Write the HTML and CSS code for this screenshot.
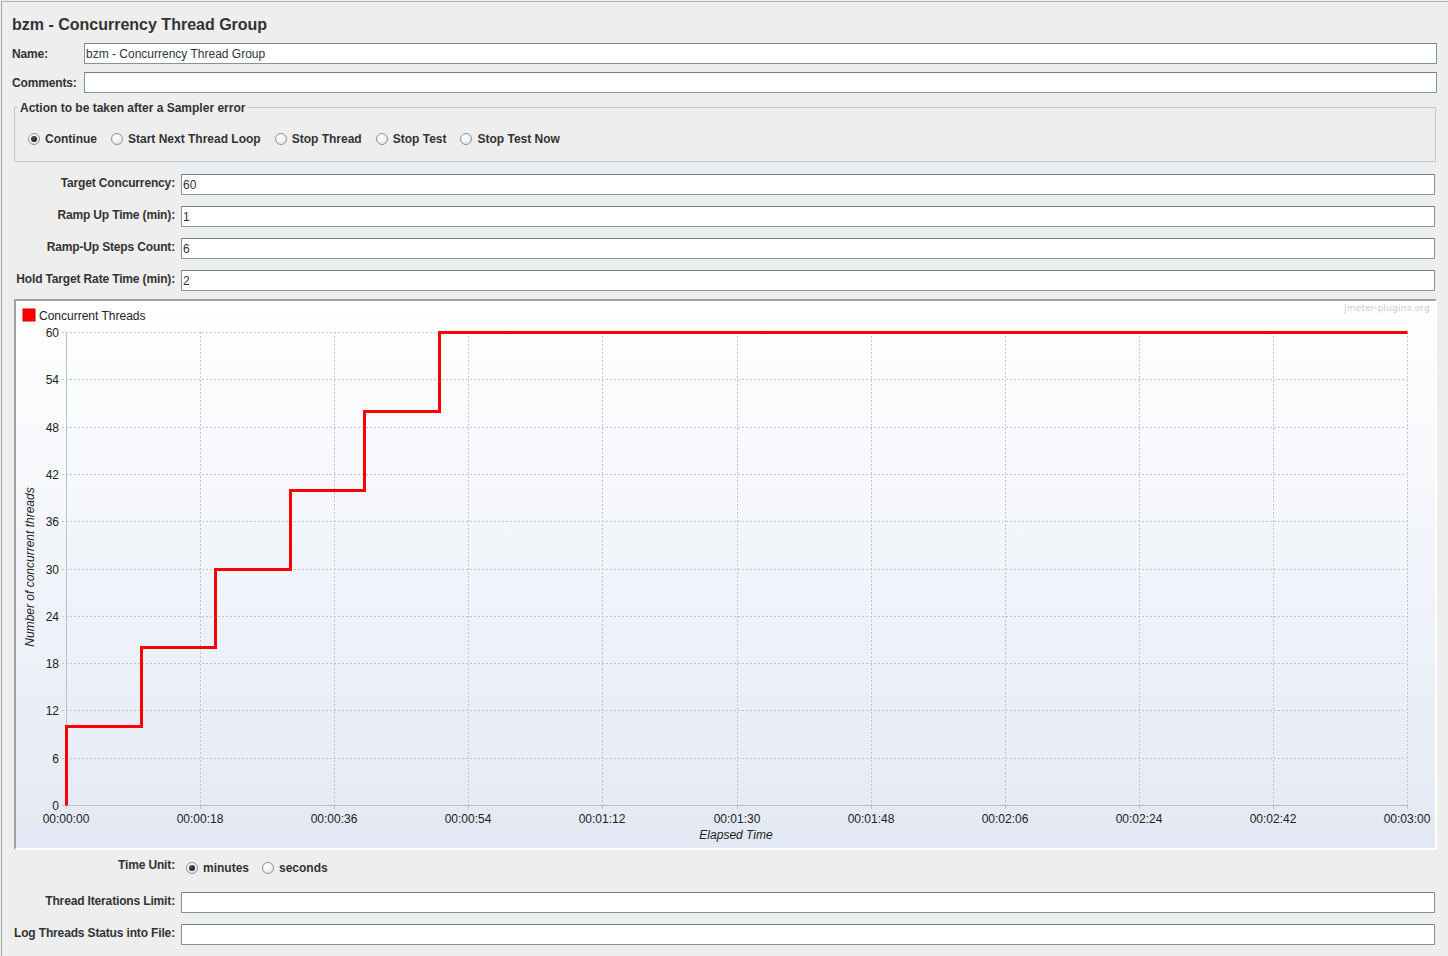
FILE: index.html
```html
<!DOCTYPE html>
<html lang="en">
<head>
    <meta charset="UTF-8">
    <title>bzm - Concurrency Thread Group</title>
    <link rel="stylesheet" href="styles.css">
</head>
<body>
    <div class="frame">
        <h2 class="title">bzm - Concurrency Thread Group</h2>

        <!-- Name / Comments -->
        <div class="row name-row">
            <label>Name:</label>
            <input type="text" value="bzm - Concurrency Thread Group">
        </div>
        <div class="row name-row next">
            <label>Comments:</label>
            <input type="text">
        </div>

        <!-- Sampler error -->
        <div class="group">
            <div class="group-title">Action to be taken after a Sampler error</div>
            <div class="radios">
                <span class="radio checked"><i></i>Continue</span>
                <span class="radio"><i></i>Start Next Thread Loop</span>
                <span class="radio"><i></i>Stop Thread</span>
                <span class="radio"><i></i>Stop Test</span>
                <span class="radio"><i></i>Stop Test Now</span>
            </div>
        </div>

        <!-- Thread settings -->
        <div class="row field first">
            <label>Target Concurrency:</label>
            <input type="text" value="60">
        </div>
        <div class="row field">
            <label>Ramp Up Time (min):</label>
            <input type="text" value="1">
        </div>
        <div class="row field">
            <label>Ramp-Up Steps Count:</label>
            <input type="text" value="6">
        </div>
        <div class="row field">
            <label>Hold Target Rate Time (min):</label>
            <input type="text" value="2">
        </div>

        <!-- Chart -->
        <div class="chart">
            <svg id="chart" width="1419" height="547"></svg>
        </div>

        <div class="row field unit-row">
            <label>Time Unit:</label>
            <div class="radios units">
                <span class="radio checked"><i></i>minutes</span>
                <span class="radio"><i></i>seconds</span>
            </div>
        </div>
        <div class="row field iter-row">
            <label>Thread Iterations Limit:</label>
            <input type="text">
        </div>
        <div class="row field">
            <label>Log Threads Status into File:</label>
            <input type="text">
        </div>
    </div>

    <script>
        const svg = document.getElementById('chart');
        const x0 = 50, x1 = 1391, yTop = 31, yBot = 504;
        const xs = (x1 - x0) / 180;
        const ys = (yBot - yTop) / 60;

        function px(t) { return Math.round(x0 + t * xs); }
        function py(v) { return Math.round(yBot - v * ys); }
        function pad(n) { return n < 10 ? '0' + n : '' + n; }
        function fmt(sec) { return '00:' + pad(Math.floor(sec / 60)) + ':' + pad(sec % 60); }

        let out = '<defs><linearGradient id="bg" x1="0" y1="0" x2="0" y2="1">' +
            '<stop offset="0" stop-color="#ffffff"/><stop offset="1" stop-color="#e3e9f4"/>' +
            '</linearGradient></defs>';
        out += '<rect width="1419" height="547" fill="url(#bg)"/>';

        // watermark + legend
        out += '<text x="1414" y="10" class="mark" text-anchor="end">jmeter-plugins.org</text>';
        out += '<rect x="7" y="8" width="12" height="12" fill="#ff0000" stroke="#d00000"/>';
        out += '<text x="23" y="19" class="lbl">Concurrent Threads</text>';

        // horizontal grid + y labels
        for (let v = 0; v <= 60; v += 6) {
            const y = py(v) + 0.5;
            if (v > 0) {
                out += `<line x1="${x0 - 4}" y1="${y}" x2="${x1}" y2="${y}" class="grid"/>`;
            } else {
                out += `<line x1="${x0 - 4}" y1="${y}" x2="${x0}" y2="${y}" class="axis"/>`;
            }
            out += `<text x="43" y="${py(v) + 5}" class="lbl" text-anchor="end">${v}</text>`;
        }

        // vertical grid + x labels
        for (let t = 0; t <= 180; t += 18) {
            const x = px(t) + 0.5;
            if (t > 0) {
                out += `<line x1="${x}" y1="${yTop}" x2="${x}" y2="${yBot}" class="grid"/>`;
            }
            out += `<line x1="${x}" y1="${yBot}" x2="${x}" y2="${yBot + 4}" class="axis"/>`;
            out += `<text x="${px(t)}" y="522" class="lbl" text-anchor="middle">${fmt(t)}</text>`;
        }

        // axes
        out += `<line x1="${x0 + 0.5}" y1="${yTop}" x2="${x0 + 0.5}" y2="${yBot}" class="axis"/>`;
        out += `<line x1="${x0}" y1="${yBot + 0.5}" x2="${x1}" y2="${yBot + 0.5}" class="axis"/>`;

        // titles
        out += '<text x="720" y="538" class="lbl it" text-anchor="middle">Elapsed Time</text>';
        out += '<text transform="translate(18 266) rotate(-90)" class="lbl it" text-anchor="middle">Number of concurrent threads</text>';

        // ramp-up steps: 6 steps of 10s, hold to 3 min
        const pts = [[0, 0]];
        for (let i = 1; i <= 6; i++) {
            pts.push([(i - 1) * 10, i * 10]);
            pts.push([i < 6 ? i * 10 : 180, i * 10]);
        }
        out += '<polyline class="series" points="' +
            pts.map(p => (px(p[0]) + 0.5) + ',' + (py(p[1]) + 0.5)).join(' ') + '"/>';

        svg.innerHTML = out;
    </script>
</body>
</html>
```

FILE: styles.css
```css
/* Page */
html, body {
    background: #eeeeee;
}

body {
    margin: 0;
    font-family: 'Liberation Sans', Arial, sans-serif;
    font-size: 12px;
    color: #333;
}

.frame {
    margin: 1px 0 0 1px;
    border-top: 1px solid #a9b3c1;
    border-left: 1px solid #a3a3a3;
    padding: 0 11px 11px 10px;
    min-height: 940px;
    box-sizing: border-box;
}

.title {
    margin: 13px 0 0;
    font-size: 16px;
    line-height: 20px;
    font-weight: bold;
    color: #333;
}

/* Rows */
.row {
    display: flex;
    align-items: center;
}

.row label {
    flex: none;
    font-weight: bold;
    line-height: 14px;
    letter-spacing: -0.15px;
    white-space: nowrap;
    color: #333;
}

.row input {
    flex: 1;
    min-width: 0;
    height: 21px;
    box-sizing: border-box;
    margin: 0;
    padding: 0 1px;
    border: 1px solid #8193a7;
    border-top-color: #6f8196;
    background: #fff;
    font-family: 'Liberation Sans', Arial, sans-serif;
    font-size: 12px;
    color: #333;
    outline: none;
}

.name-row {
    margin-top: 8px;
}

.name-row.next {
    margin-top: 8px;
}

.name-row label {
    width: 72px;
}

.field {
    margin-top: 11px;
}

.field.first {
    margin-top: 12px;
}

.field label {
    width: 169px;
    box-sizing: border-box;
    padding: 0 6px 3px 0;
    text-align: right;
}

.field input {
    margin-right: 2px;
}

/* Sampler error group */
.group {
    margin: 14px 1px 0 2px;
    border: 1px solid #b9cde2;
    padding: 0 0 12px 3px;
}

.group-title {
    width: fit-content;
    margin-top: -7px;
    padding: 0 2px;
    line-height: 14px;
    font-weight: bold;
    background: #eeeeee;
}

.radios {
    display: flex;
    align-items: center;
    height: 20px;
    margin-top: 14px;
    padding-left: 10px;
}

.radio {
    display: inline-flex;
    align-items: center;
    gap: 5px;
    margin-right: 14px;
    font-weight: bold;
    color: #333;
}

.radio i {
    position: relative;
    width: 12px;
    height: 12px;
    box-sizing: border-box;
    border: 1px solid #8d949c;
    border-radius: 50%;
    background: radial-gradient(circle at 35% 30%, #ffffff 0%, #f4f6f8 40%, #d6dce3 100%);
}

.radio.checked i::after {
    content: "";
    position: absolute;
    left: 2px;
    top: 2px;
    width: 6px;
    height: 6px;
    border-radius: 50%;
    background: radial-gradient(circle at 40% 35%, #555 0%, #1e1e1e 70%);
}

/* Chart */
.chart {
    margin: 8px 0 0 2px;
    border: 2px solid;
    border-color: #a2a2a2 #ffffff #ffffff #a2a2a2;
}

.chart svg {
    display: block;
}

.chart .lbl {
    font-family: 'Liberation Sans', Arial, sans-serif;
    font-size: 12px;
    fill: #222;
}

.chart .it {
    font-style: italic;
}

.chart .mark {
    font-family: 'DejaVu Sans', sans-serif;
    font-size: 9px;
    letter-spacing: 0.2px;
    fill: #c9cdd2;
}

.chart .grid {
    stroke: #c4c4c4;
    stroke-width: 1;
    stroke-dasharray: 2 2;
}

.chart .axis {
    stroke: #b6c0cf;
    stroke-width: 1;
}

.chart .series {
    fill: none;
    stroke: #ff0000;
    stroke-width: 3;
    stroke-linejoin: miter;
}

/* Bottom rows */
.unit-row {
    margin-top: 8px;
    align-items: flex-start;
}

.radios.units {
    margin-top: 0;
    padding-left: 5px;
}

.radios.units .radio {
    margin-right: 13px;
}

.iter-row {
    margin-top: 14px;
}
```
